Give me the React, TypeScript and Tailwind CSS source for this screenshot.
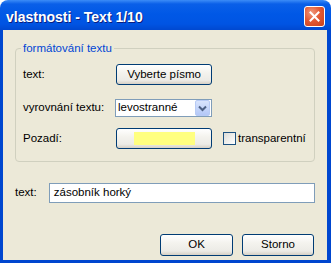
import React from "react";

const btn =
  "flex items-center justify-center rounded-[3px] border border-[#003C74] bg-[linear-gradient(to_bottom,#FFFFFF_0%,#F4F3EE_40%,#ECEBE6_80%,#D6D0C5_100%)] text-black";

const CloseIcon = () => (
  <svg width="11" height="11" viewBox="0 0 11 11">
    <path d="M1.5 1.5 L9.5 9.5 M9.5 1.5 L1.5 9.5" stroke="#fff" strokeWidth="2" strokeLinecap="square" />
  </svg>
);

const Chevron = () => (
  <svg width="9" height="7" viewBox="0 0 9 7">
    <path d="M1 1.5 L4.5 5 L8 1.5" fill="none" stroke="#4D6185" strokeWidth="2" />
  </svg>
);

export default function App() {
  return (
    <div
      className="w-[331px] h-[263px] flex flex-col rounded-t-[8px] bg-[linear-gradient(to_bottom,#3C8CF7_0px,#0A5FE8_4px,#0058E6_14px,#0054E3_24px,#0048D0_30px,#0046CF_100%)] text-[11.5px] text-black"
      style={{ fontFamily: '"Liberation Sans", Arial, sans-serif' }}
    >
      <div className="h-[30px] flex items-center justify-between pl-[6px] pr-[6px] pt-[3px]">
        <span className="text-white font-bold text-[14px] mt-[1px] [text-shadow:1px_1px_0_#0A1E80]">
          vlastnosti - Text 1/10
        </span>
        <div className="w-[21px] h-[21px] -mt-[1px] rounded-[3px] border border-white flex items-center justify-center bg-[radial-gradient(circle_at_35%_30%,#F09A7E_0%,#E35A35_45%,#C8401C_100%)]">
          <CloseIcon />
        </div>
      </div>

      <div className="flex-1 mx-[3px] mb-[3px] mr-[4px] bg-[#ECE9D8] flex flex-col px-[12px]">
        <fieldset className="mt-[11px] border border-[#D0D0BF] rounded-[4px] w-[300px] pb-[12px]">
          <legend className="ml-[5px] px-[2px] text-[#0046D5] leading-[14px]">formátování textu</legend>
          <div className="flex flex-col pl-[7px] pt-[9px]">
            <div className="flex items-center h-[21px]">
              <span className="w-[93px]">text:</span>
              <div className={`${btn} w-[96px] h-[21px]`}>Vyberte písmo</div>
            </div>
            <div className="flex items-center h-[18px] mt-[14px]">
              <span className="w-[92px]">vyrovnání textu:</span>
              <div className="w-[97px] h-[18px] border border-[#7F9DB9] bg-white flex items-center">
                <span className="flex-1 pl-[2px]">levostranné</span>
                <div className="w-[15px] h-[16px] mr-px rounded-[2px] border border-[#B8CBF5] bg-[linear-gradient(to_bottom,#D8E4FD,#B4C8F7)] flex items-center justify-center">
                  <Chevron />
                </div>
              </div>
            </div>
            <div className="flex items-center h-[21px] mt-[11px]">
              <span className="w-[93px]">Pozadí:</span>
              <div className={`${btn} w-[96px] h-[21px]`}>
                <div className="w-[61px] h-[13px] bg-[#FFFF80]" />
              </div>
              <div className="ml-[11px] w-[13px] h-[13px] border border-[#1C5180] bg-[linear-gradient(135deg,#DCDCD7,#FFFFFF)]" />
              <span className="ml-[2px]">transparentní</span>
            </div>
          </div>
        </fieldset>

        <div className="flex items-center mt-[21px]">
          <span className="w-[34px]">text:</span>
          <div className="w-[268px] h-[20px] border border-[#7F9DB9] bg-white flex items-center pl-[4px]">
            zásobník horký
          </div>
        </div>

        <div className="flex justify-end gap-[9px] mt-[31px] pr-[1px]">
          <div className={`${btn} w-[73px] h-[22px]`}>OK</div>
          <div className={`${btn} w-[72px] h-[22px]`}>Storno</div>
        </div>
      </div>
    </div>
  );
}
